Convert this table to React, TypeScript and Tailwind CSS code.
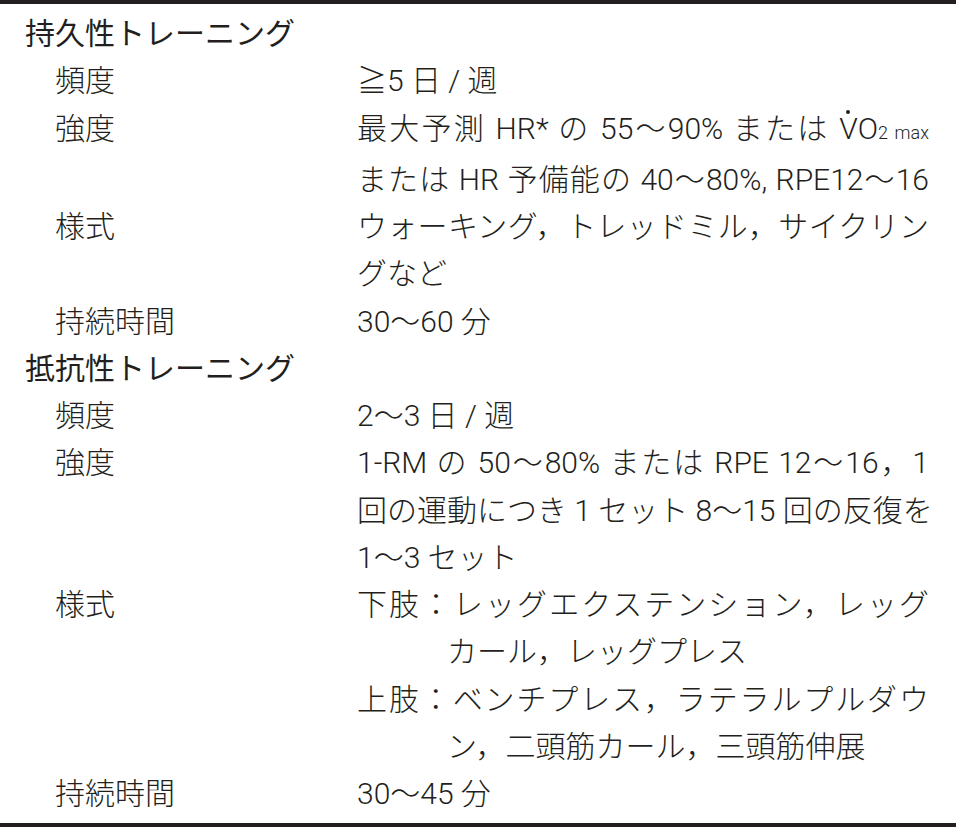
import React from "react";

type Line = { content: React.ReactNode; full?: boolean; indent?: boolean };
type Row = { label: string; lines: Line[] };

const Vdot = () => (
  <span className="relative">
    V
    <span className="absolute left-1/2 top-[-1px] h-[4px] w-[4px] -translate-x-1/2 rounded-full bg-[#231f20]" />
  </span>
);

const endurance: Row[] = [
  { label: "頻度", lines: [{ content: "≧5 日 / 週" }] },
  {
    label: "強度",
    lines: [
      {
        full: true,
        content: (
          <>
            最大予測 HR* の 55〜90% または <Vdot />O<span className="text-[18px]">2 max</span>
          </>
        ),
      },
      { full: true, content: "または HR 予備能の 40〜80%, RPE12〜16" },
    ],
  },
  {
    label: "様式",
    lines: [
      { full: true, content: "ウォーキング，トレッドミル，サイクリン" },
      { content: "グなど" },
    ],
  },
  { label: "持続時間", lines: [{ content: "30〜60 分" }] },
];

const resistance: Row[] = [
  { label: "頻度", lines: [{ content: "2〜3 日 / 週" }] },
  {
    label: "強度",
    lines: [
      { full: true, content: "1-RM の 50〜80% または RPE 12〜16，1" },
      { full: true, content: "回の運動につき 1 セット 8〜15 回の反復を" },
      { content: "1〜3 セット" },
    ],
  },
  {
    label: "様式",
    lines: [
      { full: true, content: "下肢：レッグエクステンション，レッグ" },
      { indent: true, content: "カール，レッグプレス" },
      { full: true, content: "上肢：ベンチプレス，ラテラルプルダウ" },
      { indent: true, content: "ン，二頭筋カール，三頭筋伸展" },
    ],
  },
  { label: "持続時間", lines: [{ content: "30〜45 分" }] },
];

function Section({ title, rows }: { title: string; rows: Row[] }) {
  return (
    <div>
      <div className="font-normal">{title}</div>
      {rows.map((r) => (
        <div key={r.label} className="grid grid-cols-[332px_572px]">
          <div className="pl-[30px]">{r.label}</div>
          <div>
            {r.lines.map((l, i) => (
              <div
                key={i}
                className={
                  "whitespace-nowrap " +
                  (l.full ? "text-justify [text-align-last:justify] " : "") +
                  (l.indent ? "pl-[90px]" : "")
                }
              >
                {l.content}
              </div>
            ))}
          </div>
        </div>
      ))}
    </div>
  );
}

export default function App() {
  return (
    <div className="h-[833px] w-[956px] bg-white text-[30px] font-light leading-[47.25px] text-[#231f20] font-['Roboto','Noto_Sans_CJK_JP',sans-serif]">
      <div className="border-y-[4px] border-[#231f20] px-[25px] pt-[6px] pb-[6px]">
        <Section title="持久性トレーニング" rows={endurance} />
        <Section title="抵抗性トレーニング" rows={resistance} />
      </div>
    </div>
  );
}
